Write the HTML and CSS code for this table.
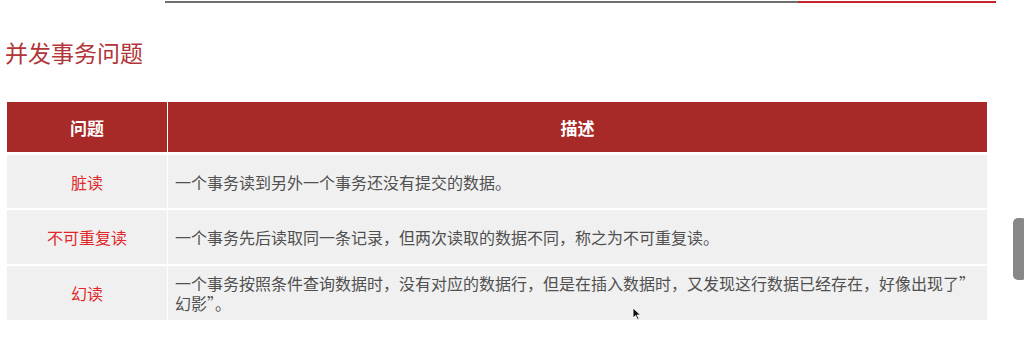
FILE: index.html
```html
<!DOCTYPE html>
<html lang="zh-CN">
<head>
<meta charset="utf-8">
<link rel="stylesheet" href="styles.css">
</head>
<body>
<div class="page">
  <div class="topline"><span class="seg-gray"></span><span class="seg-red"></span></div>
  <h1 class="title">并发事务问题</h1>
  <div class="table">
    <div class="th">问题</div>
    <div class="th">描述</div>
    <div class="td key">脏读</div>
    <div class="td desc">一个事务读到另外一个事务还没有提交的数据。</div>
    <div class="td key">不可重复读</div>
    <div class="td desc">一个事务先后读取同一条记录，但两次读取的数据不同，称之为不可重复读。</div>
    <div class="td key">幻读</div>
    <div class="td desc">一个事务按照条件查询数据时，没有对应的数据行，但是在插入数据时，又发现这行数据已经存在，好像出现了”幻影”。</div>
  </div>
  <div class="scroll-handle"></div>
  <svg class="cursor" width="10" height="14" viewBox="0 0 10 14"><path d="M1 1 L1 11 L3.5 8.5 L5.5 12.5 L7 11.8 L5 8 L8.5 8 Z" fill="#111" stroke="#fff" stroke-width="0.8"/></svg>
</div>
</body>
</html>
```
FILE: styles.css
```css
html, body { margin: 0; padding: 0; background: #fff; }
body { font-family: "Noto Sans CJK SC", "Noto Sans", sans-serif; }
.page { position: relative; width: 1024px; height: 350px; overflow: hidden; }
.topline { display: flex; padding-top: 1px; padding-left: 165px; height: 2px; }
.seg-gray { width: 633px; height: 2px; background: #6e6e6e; }
.seg-red { width: 198px; height: 2px; background: #c4262b; }
.title {
  margin: 32px 0 0 5px;
  font-size: 23px;
  font-weight: normal;
  line-height: 34px;
  color: #b23538;
  letter-spacing: 0;
}
.table {
  margin: 33px 0 0 7px;
  width: 980px;
  display: grid;
  grid-template-columns: 160px 819px;
  grid-template-rows: 50px 54px 54px 54px;
  column-gap: 1px;
  row-gap: 2px;
}
.th {
  background: #a82a28;
  color: #fff;
  font-weight: bold;
  font-size: 17px;
  display: flex; align-items: center; justify-content: center;
}
.table .th:nth-child(2) { }
.td { background: #f0f0f0; display: flex; align-items: center; font-size: 16px; }
.table .td:nth-child(3), .table .td:nth-child(4) { margin-top: 1px; }
.key { justify-content: center; color: #e0282b; }
.desc { color: #505050; padding: 0 8px 0 7px; line-height: 20px; }
.scroll-handle {
  position: absolute; left: 1013px; top: 218px; width: 14px; height: 62px;
  background: #878787; border-radius: 5px;
}
.cursor { position: absolute; left: 632px; top: 307px; }
```
